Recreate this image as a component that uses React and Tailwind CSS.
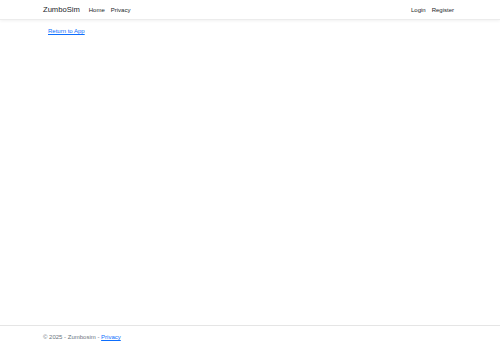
export default function App() {
  return (
    <div className="min-h-[348px] flex flex-col bg-white" style={{ fontFamily: '"Liberation Sans", Arial, sans-serif' }}>
      <header className="h-[20px] border-b border-[#ececec] shadow-[0_1px_3px_rgba(0,0,0,0.06)] bg-white">
        <div className="mx-[43px] h-full flex items-center pt-[1px]">
          <span className="text-[7.6px] text-[#212529] leading-none">ZumboSim</span>
          <nav className="ml-[9px] flex gap-[6px] text-[6px] text-[#212529] leading-none">
            <span>Home</span>
            <span>Privacy</span>
          </nav>
          <nav className="ml-auto mr-[3px] flex gap-[6px] text-[6px] text-[#212529] leading-none">
            <span>Login</span>
            <span>Register</span>
          </nav>
        </div>
      </header>
      <main className="flex-1 px-[48px] pt-[8px] text-[6px] leading-none">
        <a className="text-[#0d6efd] underline">Return to App</a>
      </main>
      <footer className="h-[23px] border-t border-[#e5e5e5] flex items-center">
        <div className="mx-[43px] text-[6px] text-[#6c757d] leading-none">
          © 2025 - Zumbosim - <a className="text-[#0d6efd] underline">Privacy</a>
        </div>
      </footer>
    </div>
  );
}
